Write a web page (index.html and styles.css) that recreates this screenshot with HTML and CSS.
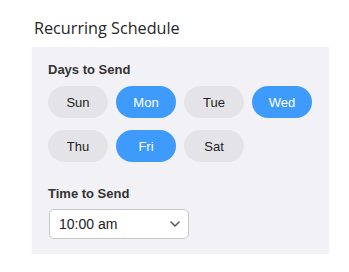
FILE: index.html
```html
<!DOCTYPE html>
<html>
<head>
<meta charset="utf-8">
<link rel="stylesheet" href="styles.css">
</head>
<body>
<div class="page">
  <h2 class="title">Recurring Schedule</h2>
  <div class="panel">
    <div class="label">Days to Send</div>
    <div class="days">
      <button class="day">Sun</button>
      <button class="day on">Mon</button>
      <button class="day">Tue</button>
      <button class="day on">Wed</button>
      <button class="day">Thu</button>
      <button class="day on">Fri</button>
      <button class="day">Sat</button>
    </div>
    <div class="label label-time">Time to Send</div>
    <div class="select">
      <span class="value">10:00 am</span>
      <svg class="chev" width="10" height="6" viewBox="0 0 10 6"><path d="M1 1 L5 5 L9 1" fill="none" stroke="#555" stroke-width="1.5" stroke-linecap="round" stroke-linejoin="round"/></svg>
    </div>
  </div>
</div>
</body>
</html>
```

FILE: styles.css
```css
html, body {
  margin: 0;
  padding: 0;
  background: #fff;
}
.page {
  padding: 16px 20px 0 32px;
}
.title {
  margin: 0 0 6px 2px;
  font-family: "Open Sans", sans-serif;
  font-weight: 400;
  font-size: 16.2px;
  line-height: 25px;
  color: #262626;
}
.panel {
  width: 297px;
  box-sizing: border-box;
  background: #f2f2f6;
  padding: 15px 16px 15px 16px;
  box-shadow: 0 1px 1px rgba(0,0,0,0.08);
}
.label {
  font-family: "Liberation Sans", Arial, sans-serif;
  font-weight: 700;
  font-size: 13px;
  line-height: 15px;
  color: #333;
}
.days {
  margin-top: 9px;
  display: grid;
  grid-template-columns: repeat(4, 60px);
  column-gap: 8px;
  row-gap: 12px;
}
.day {
  height: 32px;
  width: 60px;
  border: none;
  border-radius: 16px;
  background: #e4e4e8;
  color: #222;
  font-family: "Liberation Sans", Arial, sans-serif;
  font-size: 13px;
  padding: 0;
}
.day.on {
  background: #3e9bfc;
  color: #fff;
}
.label-time {
  margin-top: 24px;
}
.select {
  margin-top: 8px;
  margin-left: 1px;
  width: 140px;
  height: 30px;
  box-sizing: border-box;
  background: #fff;
  border: 1px solid #c8c8cc;
  border-radius: 5px;
  display: flex;
  align-items: center;
  justify-content: space-between;
  padding: 0 8px 0 9px;
}
.value {
  font-family: "Liberation Sans", Arial, sans-serif;
  font-size: 14px;
  color: #222;
}
.chev {
  display: block;
}
```
